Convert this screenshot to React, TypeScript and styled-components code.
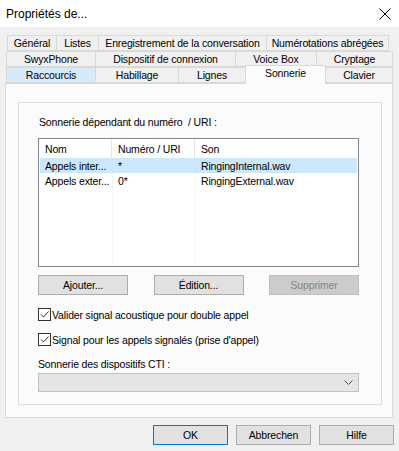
import React from "react";
import styled, { createGlobalStyle } from "styled-components";

const GlobalStyle = createGlobalStyle`
  html, body {
    margin: 0;
    padding: 0;
    background: #f0f0f0;
  }
  body {
    font-family: "Liberation Sans", Arial, sans-serif;
    font-size: 10.5px;
    letter-spacing: -0.15px;
    color: #000;
  }
`;

type TabType = {
  label: string;
  width: number;
  selected?: boolean;
  hover?: boolean;
};

const tabRows: TabType[][] = [
  [
    { label: "Général", width: 50 },
    { label: "Listes", width: 43 },
    { label: "Enregistrement de la conversation", width: 169 },
    { label: "Numérotations abrégées", width: 123 },
  ],
  [
    { label: "SwyxPhone", width: 90 },
    { label: "Dispositif de connexion", width: 141 },
    { label: "Voice Box", width: 82 },
    { label: "Cryptage", width: 77 },
  ],
  [
    { label: "Raccourcis", width: 90, hover: true },
    { label: "Habillage", width: 84 },
    { label: "Lignes", width: 68 },
    { label: "Sonnerie", width: 81, selected: true },
    { label: "Clavier", width: 68 },
  ],
];

type RowType = {
  name: string;
  number: string;
  sound: string;
  selected?: boolean;
};

const rows: RowType[] = [
  { name: "Appels inter...", number: "*", sound: "RingingInternal.wav", selected: true },
  { name: "Appels exter...", number: "0*", sound: "RingingExternal.wav" },
];

const Check = () => (
  <svg width="11" height="11" viewBox="0 0 11 11">
    <path d="M2 5.5 L4.5 8 L9.5 2.5" stroke="#333" strokeWidth="1" fill="none" />
  </svg>
);

const App: React.FC = () => {
  return (
    <>
      <GlobalStyle />
      <Window>
        <TitleBar>
          <Title>Propriétés de...</Title>
          <CloseBtn>
            <svg width="12" height="12" viewBox="0 0 12 12">
              <path d="M0.5 0.5 L11.5 11.5 M11.5 0.5 L0.5 11.5" stroke="#000" strokeWidth="1" />
            </svg>
          </CloseBtn>
        </TitleBar>

        <Body>
          <Tabs>
            {tabRows.map((row, i) => (
              <TabRow key={i} $indent={i === 0 ? 3 : 2}>
                {row.map((tab) => (
                  <Tab
                    key={tab.label}
                    $width={tab.width}
                    $selected={tab.selected}
                    $hover={tab.hover}
                  >
                    {tab.label}
                  </Tab>
                ))}
              </TabRow>
            ))}
          </Tabs>

          <Panel>
            <Group>
              <Label>Sonnerie dépendant du numéro&nbsp; / URI :</Label>
              <List>
                <ListRow $header>
                  <Cell $header>Nom</Cell>
                  <Cell $header>Numéro / URI</Cell>
                  <Cell $header>Son</Cell>
                </ListRow>
                {rows.map((r) => (
                  <ListRow key={r.name} $selected={r.selected}>
                    <Cell $selected={r.selected}>{r.name}</Cell>
                    <Cell $selected={r.selected}>{r.number}</Cell>
                    <Cell $selected={r.selected}>{r.sound}</Cell>
                  </ListRow>
                ))}
                <Filler>
                  <FillerCol />
                  <FillerCol />
                  <FillerCol $last />
                </Filler>
              </List>

              <ButtonRow>
                <Button>Ajouter...</Button>
                <Button>Édition...</Button>
                <Button disabled>Supprimer</Button>
              </ButtonRow>

              <CheckRow>
                <CheckBox>
                  <Check />
                </CheckBox>
                Valider signal acoustique pour double appel
              </CheckRow>
              <CheckRow>
                <CheckBox>
                  <Check />
                </CheckBox>
                Signal pour les appels signalés (prise d'appel)
              </CheckRow>

              <ComboLabel>Sonnerie des dispositifs CTI :</ComboLabel>
              <Combo>
                <svg width="9" height="5" viewBox="0 0 9 5">
                  <path d="M0.5 0.5 L4.5 4.5 L8.5 0.5" stroke="#555" strokeWidth="1" fill="none" />
                </svg>
              </Combo>
            </Group>
          </Panel>

          <Footer>
            <Button $primary $wide>OK</Button>
            <Button $wide>Abbrechen</Button>
            <Button $wide>Hilfe</Button>
          </Footer>
        </Body>
      </Window>
    </>
  );
};

const Window = styled.div`
  width: 399px;
  height: 451px;
  display: flex;
  flex-direction: column;
  overflow: hidden;
`;

const TitleBar = styled.div`
  height: 27px;
  background: #fff;
  display: flex;
  align-items: center;
  justify-content: space-between;
  padding: 0 8px 0 6px;
`;

const Title = styled.div`
  font-size: 12px;
  letter-spacing: 0;
  color: #000;
`;

const CloseBtn = styled.div`
  display: flex;
  align-items: center;
  padding-top: 1px;
`;

const Body = styled.div`
  flex: 1;
  display: flex;
  flex-direction: column;
  padding: 8px 6px 0 5px;
`;

const Tabs = styled.div`
  display: flex;
  flex-direction: column;
`;

const TabRow = styled.div<{ $indent: number }>`
  display: flex;
  align-items: flex-end;
  height: 16px;
  padding-left: ${(p) => p.$indent}px;
  position: relative;
  z-index: 1;
`;

const Tab = styled.div<{ $width: number; $selected?: boolean; $hover?: boolean }>`
  box-sizing: border-box;
  width: ${(p) => p.$width}px;
  height: ${(p) => (p.$selected ? "19px" : "16px")};
  margin-left: -1px;
  margin-bottom: ${(p) => (p.$selected ? "-1px" : "0")};
  border: 1px solid #d9d9d9;
  border-bottom: ${(p) => (p.$selected ? "none" : "1px solid #d9d9d9")};
  background: ${(p) => (p.$selected ? "#fbfbfb" : p.$hover ? "#d8eaf9" : "#f0f0f0")};
  display: flex;
  align-items: ${(p) => (p.$selected ? "flex-start" : "center")};
  padding-top: ${(p) => (p.$selected ? "1px" : "0")};
  justify-content: center;
  white-space: nowrap;
  line-height: 13px;
  position: relative;
  z-index: ${(p) => (p.$selected ? 2 : 1)};
`;

const Panel = styled.div`
  box-sizing: border-box;
  width: 388px;
  height: 335px;
  border: 1px solid #d9d9d9;
  background: #fbfbfb;
  padding: 18px 11px 0 12px;
`;

const Group = styled.div`
  box-sizing: border-box;
  width: 364px;
  height: 303px;
  border: 1px solid #dcdcdc;
  box-shadow: inset 1px 1px 0 #fff;
  padding: 13px 22px 0 19px;
  display: flex;
  flex-direction: column;
`;

const Label = styled.div`
  line-height: 13px;
  padding-left: 1px;
`;

const List = styled.div`
  box-sizing: border-box;
  margin-top: 9px;
  height: 129px;
  border: 1px solid #828790;
  background: #fff;
  display: flex;
  flex-direction: column;
`;

const ListRow = styled.div<{ $header?: boolean; $selected?: boolean }>`
  display: grid;
  grid-template-columns: 73px 83px 1fr;
  height: ${(p) => (p.$header ? "19px" : "15px")};
  margin: ${(p) => (p.$header ? "0" : "0 1px")};
  background: ${(p) => (p.$selected ? "#cce8ff" : "transparent")};
`;

const Cell = styled.div<{ $header?: boolean; $selected?: boolean }>`
  display: flex;
  align-items: center;
  padding-left: ${(p) => (p.$header ? "6px" : "5px")};
  border-right: 1px solid
    ${(p) => (p.$header ? "#e5e5e5" : p.$selected ? "transparent" : "#f0f5fb")};
  white-space: nowrap;
  overflow: hidden;
  &:last-child {
    border-right: none;
  }
`;

const Filler = styled.div`
  flex: 1;
  display: grid;
  grid-template-columns: 74px 83px 1fr;
`;

const FillerCol = styled.div<{ $last?: boolean }>`
  border-right: ${(p) => (p.$last ? "none" : "1px solid #f0f5fb")};
`;

const ButtonRow = styled.div`
  display: flex;
  justify-content: space-between;
  margin-top: 8px;
`;

const Button = styled.button<{ $primary?: boolean; $wide?: boolean }>`
  box-sizing: border-box;
  width: ${(p) => (p.$wide ? "75px" : "90px")};
  height: 20px;
  padding: 0;
  font-family: "Liberation Sans", Arial, sans-serif;
  font-size: 10.5px;
  letter-spacing: -0.15px;
  color: #000;
  background: #e1e1e1;
  border: 1px solid ${(p) => (p.$primary ? "#0078d7" : "#adadad")};
  &:disabled {
    background: #cccccc;
    border-color: #bfbfbf;
    color: #838383;
  }
`;

const CheckRow = styled.div`
  display: flex;
  align-items: center;
  height: 13px;
  margin-top: 13px;
  & + & {
    margin-top: 12px;
  }
`;

const CheckBox = styled.div`
  box-sizing: border-box;
  width: 13px;
  height: 13px;
  border: 1px solid #333;
  background: #fff;
  display: flex;
  align-items: center;
  justify-content: center;
  margin-right: 1px;
`;

const ComboLabel = styled.div`
  margin-top: 12px;
  line-height: 13px;
`;

const Combo = styled.div`
  box-sizing: border-box;
  margin-top: 2px;
  height: 19px;
  border: 1px solid #c2c2c2;
  background: #e5e5e5;
  display: flex;
  align-items: center;
  justify-content: flex-end;
  padding-right: 5px;
`;

const Footer = styled.div`
  display: flex;
  justify-content: flex-end;
  gap: 8px;
  margin-top: 7px;
  margin-right: -1px;
`;

export default App;
